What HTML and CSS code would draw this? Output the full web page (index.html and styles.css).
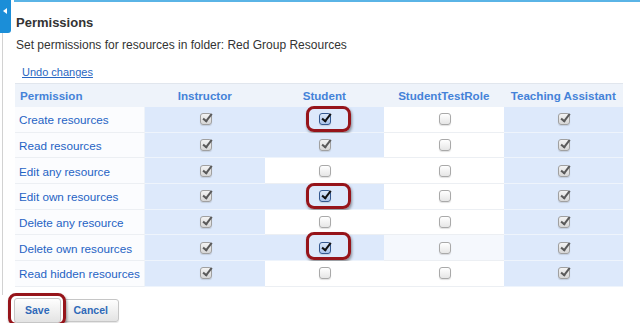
FILE: index.html
```html
<!DOCTYPE html>
<html>
<head>
  <meta charset="UTF-8">
  <title>Permissions</title>
  <link rel="stylesheet" href="styles.css">
</head>
<body>
  <div class="screen">
    <div class="rail">
      <div class="tab"><span class="tab-arrow"></span></div>
      <div class="rail-line"></div>
    </div>

    <div class="main">
      <h2 class="title">Permissions</h2>
      <p class="intro">Set permissions for resources in folder: Red Group Resources</p>
      <a class="undo" href="#">Undo changes</a>

      <table class="perms">
        <thead>
          <tr>
            <th class="perm-col">Permission</th>
            <th>Instructor</th>
            <th>Student</th>
            <th>StudentTestRole</th>
            <th>Teaching Assistant</th>
          </tr>
        </thead>
        <tbody>
          <tr>
            <td class="perm-col"><a href="#">Create resources</a></td>
            <td class="on"><span class="cb cb-locked"></span></td>
            <td class="on"><span class="ring"></span><span class="cb cb-checked"></span></td>
            <td><span class="cb"></span></td>
            <td class="on"><span class="cb cb-locked"></span></td>
          </tr>
          <tr>
            <td class="perm-col"><a href="#">Read resources</a></td>
            <td class="on"><span class="cb cb-locked"></span></td>
            <td class="on"><span class="cb cb-locked"></span></td>
            <td><span class="cb"></span></td>
            <td class="on"><span class="cb cb-locked"></span></td>
          </tr>
          <tr>
            <td class="perm-col"><a href="#">Edit any resource</a></td>
            <td class="on"><span class="cb cb-locked"></span></td>
            <td><span class="cb"></span></td>
            <td><span class="cb"></span></td>
            <td class="on"><span class="cb cb-locked"></span></td>
          </tr>
          <tr>
            <td class="perm-col"><a href="#">Edit own resources</a></td>
            <td class="on"><span class="cb cb-locked"></span></td>
            <td class="on"><span class="ring"></span><span class="cb cb-checked"></span></td>
            <td><span class="cb"></span></td>
            <td class="on"><span class="cb cb-locked"></span></td>
          </tr>
          <tr>
            <td class="perm-col"><a href="#">Delete any resource</a></td>
            <td class="on"><span class="cb cb-locked"></span></td>
            <td><span class="cb"></span></td>
            <td><span class="cb"></span></td>
            <td class="on"><span class="cb cb-locked"></span></td>
          </tr>
          <tr>
            <td class="perm-col"><a href="#">Delete own resources</a></td>
            <td class="on"><span class="cb cb-locked"></span></td>
            <td class="on"><span class="ring ring-low"></span><span class="cb cb-checked"></span></td>
            <td class="dotted"><span class="cb"></span></td>
            <td class="on"><span class="cb cb-locked"></span></td>
          </tr>
          <tr>
            <td class="perm-col"><a href="#">Read hidden resources</a></td>
            <td class="on"><span class="cb cb-locked"></span></td>
            <td><span class="cb"></span></td>
            <td><span class="cb"></span></td>
            <td class="on"><span class="cb cb-locked"></span></td>
          </tr>
        </tbody>
      </table>

      <div class="actions">
        <span class="save-wrap">
          <button type="button" class="btn btn-save">Save</button>
          <span class="ring ring-save"></span>
        </span>
        <button type="button" class="btn btn-cancel">Cancel</button>
      </div>
    </div>
  </div>
</body>
</html>
```

FILE: styles.css
```css
body {
  margin: 0;
  background-color: #fff;
  font-family: "Liberation Sans", Arial, sans-serif;
  color: #333;
}
.screen {
  display: flex;
}
.rail {
  width: 14px;
  flex-shrink: 0;
}
.tab {
  width: 11px;
  height: 33px;
  background-color: #1b8ed8;
  border-bottom-right-radius: 3px;
  padding-top: 8px;
  box-sizing: border-box;
}
.tab-arrow {
  display: block;
  width: 0;
  height: 0;
  margin-left: 3px;
  border-top: 3px solid transparent;
  border-bottom: 3px solid transparent;
  border-right: 4px solid #fff;
}
.rail-line {
  width: 1px;
  height: 262px;
  margin-left: 2px;
  background-color: #d2d2d2;
}
.main {
  flex: 1;
  border-top: 2px solid #5ab4e6;
}
.title {
  margin: 13px 0 6px 2px;
  font-size: 13px;
  line-height: 16px;
  font-weight: bold;
  color: #333;
}
.intro {
  margin: 0 0 12px 2px;
  font-size: 12px;
  line-height: 16px;
  color: #333;
}
.undo {
  display: block;
  margin-left: 8px;
  font-size: 11px;
  line-height: 14px;
  color: #2a67c2;
}
.perms {
  margin: 4px 0 0 1px;
  width: 608px;
  border-collapse: separate;
  border-spacing: 0;
  table-layout: fixed;
}
.perms th {
  height: 23px;
  padding: 0;
  font-size: 11.6px;
  font-weight: bold;
  color: #4482d8;
  text-align: center;
  background-color: #eef3fa;
  border-top: 1px solid #e1e6ed;
}
.perms th.perm-col {
  width: 125px;
  padding-left: 5px;
  text-align: left;
}
.perms td {
  position: relative;
  height: 24.7px;
  padding: 0;
  text-align: center;
  background-color: #fff;
  border-bottom: 1px solid #eceff3;
}
.perms td.on {
  background-color: #dde9fb;
  border-bottom-color: #eef4fc;
}
.perms td.dotted {
  background-color: #f5f8fd;
}
.perms td.perm-col {
  padding-left: 4px;
  text-align: left;
  background-color: #fbfcfe;
  border-right: 1px solid #eef3f9;
}
.perms td.perm-col a {
  font-size: 11.7px;
  color: #1f63c4;
  text-decoration: none;
}
.cb {
  position: relative;
  display: block;
  width: 10px;
  height: 10px;
  margin: 0 auto;
  left: 1px;
  border: 1px solid #a9a9a9;
  border-radius: 3px;
  background: linear-gradient(#ffffff, #e6e6e6);
  box-shadow: 0 1px 1px rgba(0, 0, 0, 0.12);
}
.cb-locked {
  background: linear-gradient(#f3f3f3, #d6d6d6);
  border-color: #a0a0a0;
}
.cb-checked {
  background: linear-gradient(#dbe7f8, #a9c3e9);
  border-color: #34588f;
}
.cb-locked::after,
.cb-checked::after {
  content: "";
  position: absolute;
  left: 4px;
  top: -2px;
  width: 3px;
  height: 8px;
  border-right: 2px solid #5a5a5a;
  border-bottom: 2px solid #5a5a5a;
  transform: rotate(38deg);
}
.cb-checked::after {
  border-color: #111;
}
.ring {
  position: absolute;
  left: 41px;
  top: -1px;
  width: 45px;
  height: 26px;
  box-sizing: border-box;
  border: 3.5px solid #96141a;
  border-radius: 8px;
  box-shadow: 1px 2px 3px rgba(0, 0, 0, 0.4);
  pointer-events: none;
}
.ring-low {
  top: -3px;
  height: 28px;
}
.actions {
  display: flex;
  align-items: center;
  gap: 2px;
  margin-top: 11px;
}
.save-wrap {
  position: relative;
  display: inline-flex;
}
.btn {
  padding: 0 10px;
  font-family: "Liberation Sans", Arial, sans-serif;
  font-size: 10.5px;
  font-weight: bold;
  color: #2f69b8;
  border: 1px solid #c6c6c6;
  border-radius: 3px;
  background: linear-gradient(#fefefe, #e3e3e3);
  box-shadow: 0 1px 1px rgba(0, 0, 0, 0.1);
}
.btn-save {
  height: 25px;
}
.btn-cancel {
  height: 23px;
}
.ring-save {
  left: -6px;
  top: -5px;
  width: auto;
  height: auto;
  right: -5px;
  bottom: -3px;
}
```
